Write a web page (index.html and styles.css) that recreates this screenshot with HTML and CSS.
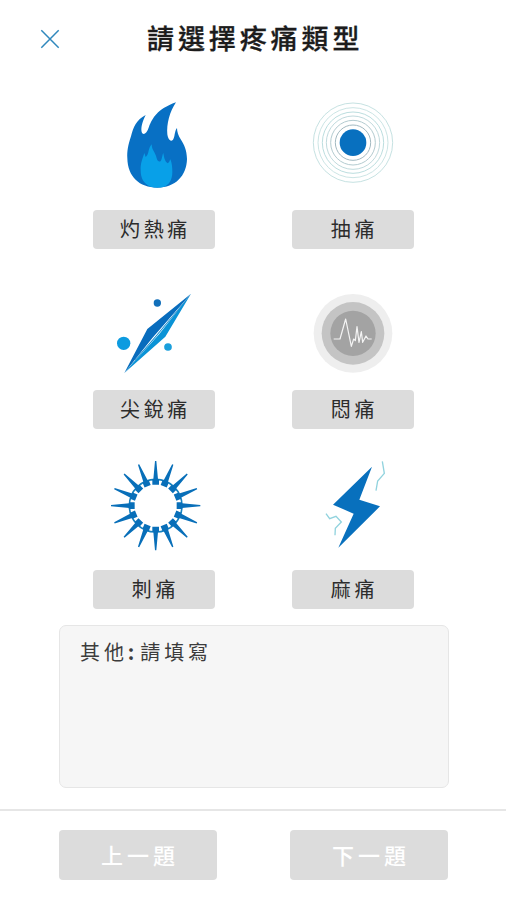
FILE: index.html
```html
<!DOCTYPE html>
<html lang="zh-Hant">
<head>
<meta charset="utf-8">
<title>請選擇疼痛類型</title>
<link rel="stylesheet" href="styles.css">
</head>
<body>
<div class="screen">
  <header class="header">
    <svg class="close" viewBox="0 0 20 20"><path d="M1.3 1.3 18.7 18.7M18.7 1.3 1.3 18.7" fill="none" stroke="#3088bd" stroke-width="1.5"/></svg>
    <h1 class="title">請選擇疼痛類型</h1>
  </header>

  <main class="types">
    <div class="type">
      <svg class="icon" viewBox="-51 0 366 330">
        <path fill="#0870c4" d="M198 37C140 58 128 85 117 110C110 132 99 137 95 126C92 111 98 94 107 75C79 89 70 112 63 139C54 166 51 183 52 205C53 260 88 293 142 293C196 293 230 257 231 207C230 178 223 166 213 149C205 137 201 125 201 114C193 124 195 141 189 149C181 158 174 146 172 133C169 103 179 65 198 37Z"/>
        <path fill="#08a0e8" d="M125 163C125 181 137 187 140 205C143 216 151 218 154 209C157 202 157 193 160 189C162 203 165 215 173 220C178 218 178 213 181 208C186 220 187 232 187 246C187 271 176 286 160 291Q142 295 122 290C101 282 92 265 92 241C91 219 98 205 103 189L107 201C118 193 113 176 125 163Z"/>
      </svg>
      <button class="label">灼熱痛</button>
    </div>
    <div class="type">
      <svg class="icon" viewBox="-24 0 366 330">
        <circle cx="159" cy="158" r="40" fill="#0870bf"/>
        <g fill="none" stroke-width="3">
          <circle cx="159" cy="158" r="53" stroke="#a2b9c1"/>
          <circle cx="159" cy="158" r="67" stroke="#b3cbd0"/>
          <circle cx="159" cy="158" r="80" stroke="#c0dadd"/>
          <circle cx="159" cy="158" r="92" stroke="#bcdedf"/>
          <circle cx="159" cy="158" r="105" stroke="#cce5e5"/>
          <circle cx="159" cy="158" r="119" stroke="#c6e2e2"/>
        </g>
      </svg>
      <button class="label">抽痛</button>
    </div>
    <div class="type">
      <svg class="icon" viewBox="-36 -30 366 330">
        <path fill="#0a93d6" d="M258 41 181 170 58 279 150 170Z"/>
        <path fill="#dff3fa" d="M250 51 165 160 84 250 147 177Z"/>
        <path fill="#086cbd" d="M258 41 127 147 58 279 142 174Z"/>
        <path fill="none" stroke="#1b83c8" stroke-width="2" d="M243 61 158 163 90 240"/>
        <circle cx="157" cy="69" r="11" fill="#126fba"/>
        <circle cx="56" cy="190" r="20" fill="#0d9be0"/>
        <circle cx="189" cy="201" r="11.5" fill="#1a9fdc"/>
      </svg>
      <button class="label">尖銳痛</button>
    </div>
    <div class="type">
      <svg class="icon" viewBox="-24 -30 366 330">
        <circle cx="159" cy="160" r="118" fill="#eee"/>
        <circle cx="159" cy="160" r="94" fill="#c4c4c4"/>
        <circle cx="159" cy="160" r="68" fill="#a3a3a3"/>
        <path d="M101 177H120L137 117 154 199 161 177 166 182 171 140 177 187 184 155 188 187 198 168 204 177H215" fill="none" stroke="#f4f4f4" stroke-width="3.6" stroke-linejoin="round"/>
      </svg>
      <button class="label">悶痛</button>
    </div>
    <div class="type">
      <svg class="icon" viewBox="-36 0 366 330">
        <defs>
          <path id="spike" d="M-2 -134H2L7 -79H10V-63H-10V-79H-7Z"/>
        </defs>
        <g transform="translate(152 167)">
          <circle r="79" fill="none" stroke="#1782bf" stroke-width="5"/>
          <g fill="#086fb9">
            <use href="#spike"/><use href="#spike" transform="rotate(22.5)"/><use href="#spike" transform="rotate(45)"/><use href="#spike" transform="rotate(67.5)"/>
            <use href="#spike" transform="rotate(90)"/><use href="#spike" transform="rotate(112.5)"/><use href="#spike" transform="rotate(135)"/><use href="#spike" transform="rotate(157.5)"/>
            <use href="#spike" transform="rotate(180)"/><use href="#spike" transform="rotate(202.5)"/><use href="#spike" transform="rotate(225)"/><use href="#spike" transform="rotate(247.5)"/>
            <use href="#spike" transform="rotate(270)"/><use href="#spike" transform="rotate(292.5)"/><use href="#spike" transform="rotate(315)"/><use href="#spike" transform="rotate(337.5)"/>
          </g>
        </g>
      </svg>
      <button class="label">刺痛</button>
    </div>
    <div class="type">
      <svg class="icon" viewBox="-54 0 366 330">
        <path fill="#0870bd" d="M186 50 148 149 210 169 85 293 131 191 69 164Z"/>
        <path d="M217 34 223 70 203 93 198 122M48 191 59 206 78 199 94 216 76 235 75 256" fill="none" stroke="#91d3de" stroke-width="4"/>
      </svg>
      <button class="label">麻痛</button>
    </div>
  </main>

  <div class="other">其他<span class="colon">:</span>請填寫</div>

  <footer class="footer">
    <button class="nav">上一題</button>
    <button class="nav">下一題</button>
  </footer>
</div>
</body>
</html>
```
FILE: styles.css
```css
* {
  box-sizing: border-box;
}

body {
  margin: 0;
  background: #fff;
  color: #1c1c1c;
  font-family: "Noto Sans CJK TC", sans-serif;
}

.screen {
  display: flex;
  flex-direction: column;
  width: 506px;
  height: 900px;
  overflow: hidden;
}

.header {
  display: grid;
  grid-template-columns: 107px 1fr;
  align-items: center;
  height: 78px;
  padding-left: 40px;
}

.close {
  width: 20px;
  height: 20px;
}

.title {
  margin: 0 0 2px;
  font-size: 27px;
  font-weight: 500;
  line-height: 40px;
  letter-spacing: 3.9px;
  white-space: nowrap;
  -webkit-text-stroke: 0.3px currentColor;
}

.types {
  display: grid;
  grid-template-columns: 122px 122px;
  column-gap: 77px;
  grid-auto-rows: 180px;
  margin: 12px 0 0 93px;
  height: 535px;
  flex: none;
}

.type {
  display: flex;
  flex-direction: column;
}

.icon {
  display: block;
  width: 122px;
  height: 110px;
  margin-bottom: 10px;
}

.label,
.nav {
  border: 0;
  padding: 0;
  border-radius: 4px;
  background: #dcdcdc;
  font-family: inherit;
  text-align: center;
}

.label {
  height: 39px;
  padding: 0 0 1px 3px;
  color: #2c2c2c;
  font-size: 20px;
  line-height: 38px;
  letter-spacing: 3.7px;
}

.other {
  flex: none;
  width: 390px;
  height: 163px;
  margin-left: 58.5px;
  padding: 11px 20.5px;
  border: 1px solid #e6e6e6;
  border-radius: 7px;
  background: #f6f6f6;
  color: #3c3c3c;
  font-size: 20px;
  line-height: 30px;
  letter-spacing: 3.9px;
}

.colon {
  display: inline-block;
  width: 12.5px;
  letter-spacing: 0;
  font-weight: 700;
}

.footer {
  display: flex;
  justify-content: space-between;
  align-items: flex-start;
  flex: 1;
  margin-top: 21px;
  padding: 19px 58px 0 59px;
  border-top: 2px solid #e6e6e6;
}

.nav {
  width: 158px;
  height: 50px;
  padding: 0 0 2px 4px;
  color: #fff;
  font-size: 22px;
  font-weight: 500;
  line-height: 48px;
  letter-spacing: 4px;
}
```
